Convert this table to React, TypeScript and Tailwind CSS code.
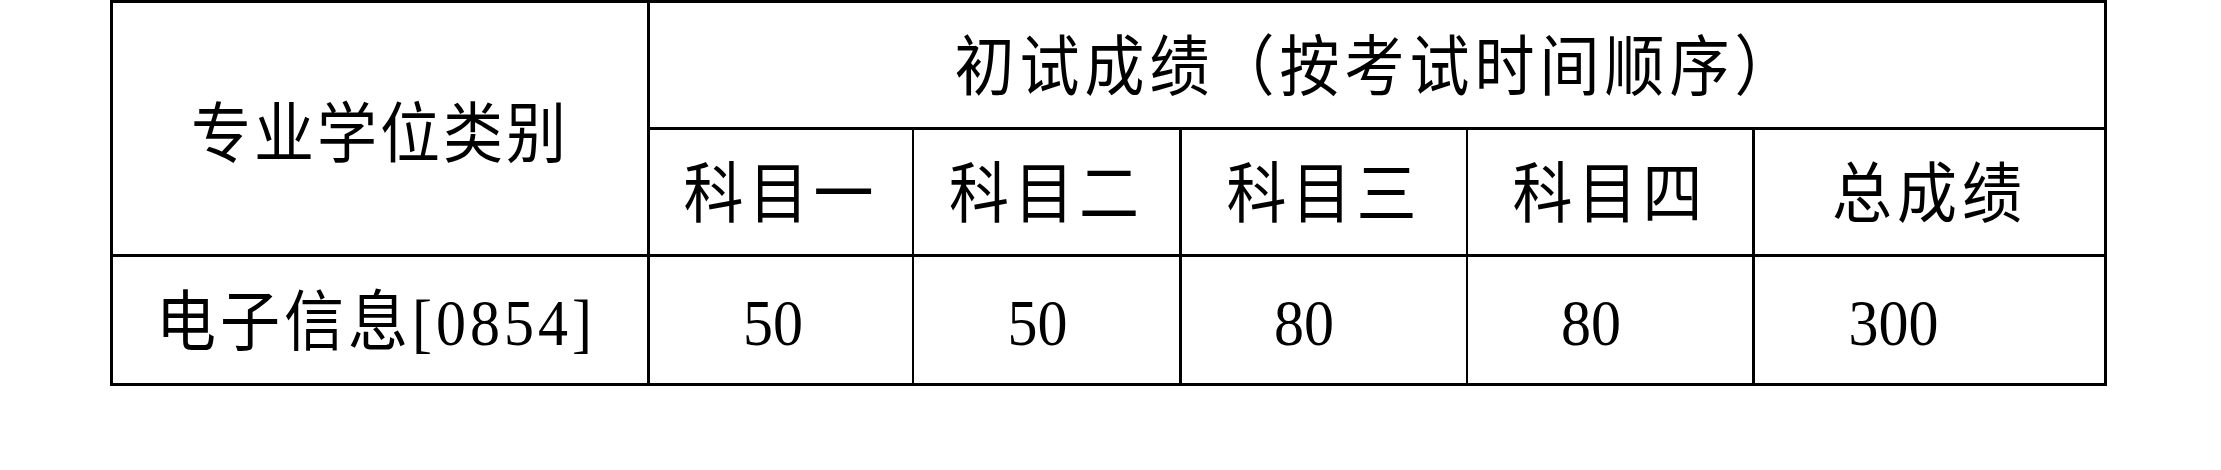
const font = { fontFamily: '"Liberation Serif", "Noto Sans CJK SC", serif' };

const subjects = [
  { label: "科目一", score: "50", border: "border-r-2", pad: "pr-[16px]" },
  { label: "科目二", score: "50", border: "border-r-[3px]", pad: "pr-[18px]" },
  { label: "科目三", score: "80", border: "border-r-2", pad: "pr-[40px]" },
  { label: "科目四", score: "80", border: "border-r-[3px]", pad: "pr-[38px]" },
  { label: "总成绩", score: "300", border: "", pad: "pr-[72px]" },
];

// 原图文字略有纵向拉伸
function T({ children, className = "" }: { children: React.ReactNode; className?: string }) {
  return <span className={`inline-block scale-y-[1.1] ${className}`}>{children}</span>;
}

export default function App() {
  return (
    <div className="h-[470px] w-[2221px] bg-white text-black" style={font}>
      <div className="ml-[110px] grid w-[1997px] grid-cols-[537px_264px_268px_286px_287px_349px] grid-rows-[127px_127px_126px] border-[3px] border-black text-[60px] leading-none">
        {/* 左侧合并单元格 */}
        <div className="row-span-2 flex items-center justify-center border-r-[3px] border-b-[3px] border-black pt-[12px]">
          <T className="tracking-[3px]">专业学位类别</T>
        </div>
        <div className="col-span-5 flex items-center justify-center border-b-[3px] border-black pt-[5px]">
          <T className="tracking-[5px]">初试成绩（按考试时间顺序）</T>
        </div>

        {subjects.map((s) => (
          <div
            key={s.label}
            className={`flex items-center justify-center border-b-[3px] border-black pt-[5px] ${s.border}`}
          >
            <T className="tracking-[5px]">{s.label}</T>
          </div>
        ))}

        <div className="flex items-center justify-center border-r-[3px] border-black pt-[5px] pr-[8px]">
          <T className="tracking-[4px]">电子信息[0854]</T>
        </div>
        {subjects.map((s) => (
          <div key={s.label} className={`flex items-center justify-center border-black pt-[5px] ${s.border} ${s.pad}`}>
            <T>{s.score}</T>
          </div>
        ))}
      </div>
    </div>
  );
}
